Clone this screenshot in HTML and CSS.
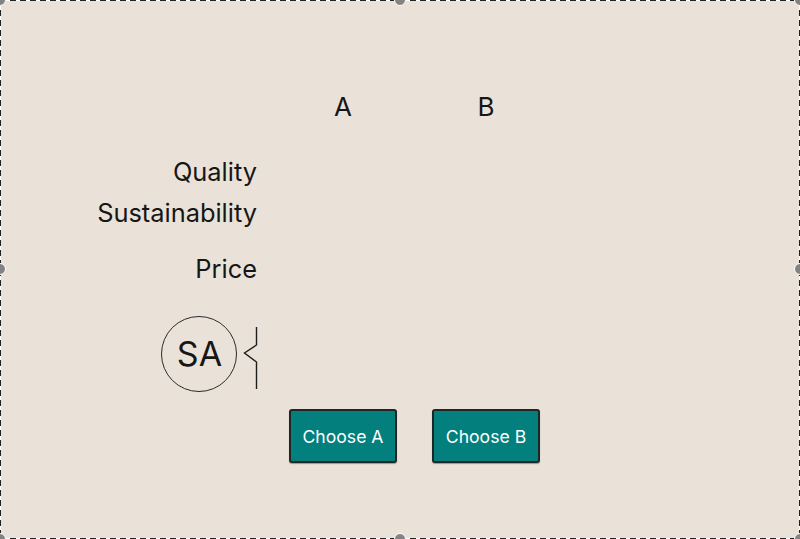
FILE: index.html
```html
<!DOCTYPE html>
<html lang="en">
<head>
<meta charset="utf-8">
<title>Choice</title>
<link rel="stylesheet" href="styles.css">
</head>
<body>
<div class="frame">
  <div class="board">
    <div class="label"></div>
    <div class="head">A</div>
    <div class="head">B</div>

    <div class="label">Quality</div>
    <div class="cell"></div>
    <div class="cell"></div>

    <div class="label">Sustainability</div>
    <div class="cell"></div>
    <div class="cell"></div>

    <div class="label">Price</div>
    <div class="cell"></div>
    <div class="cell"></div>

    <div class="label avatar-cell">
      <div class="avatar">SA</div>
      <svg class="bracket" width="16" height="62" viewBox="0 0 16 62">
        <path d="M13.5 0 V18 L1.5 26 L13.5 35 V62" fill="none" stroke="#1e1e1e" stroke-width="1.4" stroke-linejoin="miter"/>
      </svg>
    </div>
    <div class="cell"></div>
    <div class="cell"></div>

    <div class="label"></div>
    <div class="cell center"><button class="choose">Choose A</button></div>
    <div class="cell center"><button class="choose">Choose B</button></div>
  </div>

  <span class="handle h-tl"></span>
  <span class="handle h-tc"></span>
  <span class="handle h-tr"></span>
  <span class="handle h-ml"></span>
  <span class="handle h-mr"></span>
  <span class="handle h-bl"></span>
  <span class="handle h-bc"></span>
  <span class="handle h-br"></span>
</div>
</body>
</html>
```

FILE: styles.css
```css
html, body {
  margin: 0;
  padding: 0;
  width: 800px;
  height: 539px;
  overflow: hidden;
  background: #ffffff;
}

.frame {
  position: relative;
  box-sizing: border-box;
  width: 800px;
  height: 539px;
  border: 1px solid transparent;
  border-radius: 6px;
  background:
    repeating-linear-gradient(90deg, #222222 0 6px, #ffffff 6px 10px) top left / 100% 1px no-repeat border-box,
    repeating-linear-gradient(90deg, #222222 0 6px, #ffffff 6px 10px) bottom left / 100% 1px no-repeat border-box,
    repeating-linear-gradient(180deg, #222222 0 6px, #ffffff 6px 10px) top left / 1px 100% no-repeat border-box,
    repeating-linear-gradient(180deg, #222222 0 6px, #ffffff 6px 10px) top right / 1px 100% no-repeat border-box,
    #eae2d8;
  padding-top: 90px;
  font-family: Inter, "Liberation Sans", sans-serif;
  color: #161616;
}

.board {
  display: grid;
  grid-template-columns: 270px 144px 142px;
  grid-template-rows: 65px 41px 56px 63px 93px 54px;
}

.label {
  font-size: 25.4px;
  line-height: 32px;
  text-align: right;
  padding-right: 14px;
}

.head {
  font-size: 26px;
  line-height: 32px;
  text-align: center;
}

.center {
  display: flex;
  justify-content: center;
  align-items: flex-start;
}

.avatar-cell {
  display: flex;
  justify-content: flex-end;
  align-items: flex-start;
  gap: 6px;
  padding-right: 12px;
}

.avatar {
  box-sizing: border-box;
  width: 76px;
  height: 76px;
  border: 1px solid #2a2a2a;
  border-radius: 50%;
  display: flex;
  align-items: center;
  justify-content: center;
  font-size: 34px;
  line-height: 1;
  padding-left: 1px;
}

.bracket {
  display: block;
  margin-top: 11px;
}

.choose {
  box-sizing: border-box;
  width: 108px;
  height: 54px;
  background: #037f7e;
  color: #ffffff;
  border: 2px solid #1f2626;
  border-radius: 3px;
  box-shadow: 0 1px 1px rgba(0, 0, 0, 0.35);
  font-family: Inter, "Liberation Sans", sans-serif;
  font-size: 17.6px;
  padding: 0;
}

.handle {
  position: absolute;
  width: 12px;
  height: 12px;
  border-radius: 50%;
  background: #838383;
  border: 1px solid #ffffff;
  box-sizing: border-box;
}

.h-tl { left: -7px; top: -7px; }
.h-tc { left: 393px; top: -7px; }
.h-tr { right: -7px; top: -7px; }
.h-ml { left: -7px; top: 262px; }
.h-mr { right: -7px; top: 262px; }
.h-bl { left: -7px; bottom: -7px; }
.h-bc { left: 393px; bottom: -7px; }
.h-br { right: -7px; bottom: -7px; }
```
